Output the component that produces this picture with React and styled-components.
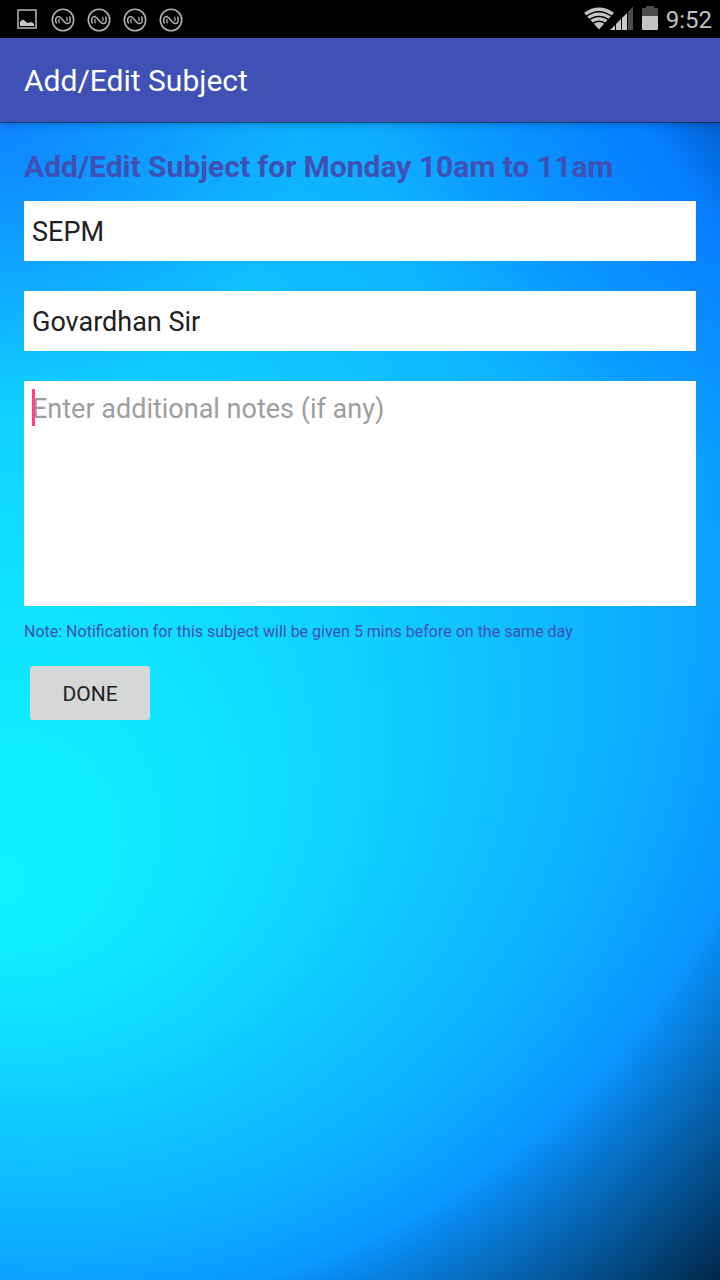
import React from "react";
import styled, { createGlobalStyle } from "styled-components";

const GlobalStyle = createGlobalStyle`
  *, *::before, *::after { box-sizing: border-box; }
  body { margin: 0; font-family: Roboto, "Liberation Sans", sans-serif; }
`;

const Screen = styled.div`
  display: flex;
  flex-direction: column;
  min-height: 100vh;
`;

const StatusBar = styled.div`
  display: flex;
  align-items: center;
  justify-content: space-between;
  height: 38px;
  padding: 2px 8px 0 15px;
  background: #000;
  color: #c0c0c0;
`;

const IconRow = styled.div`
  display: flex;
  align-items: center;
  gap: ${({ $gap }) => $gap}px;
  svg { display: block; }
`;

const Clock = styled.time`
  font-size: 24px;
  line-height: 36px;
`;

const AppBar = styled.header`
  position: relative;
  z-index: 1;
  display: flex;
  align-items: center;
  height: 84px;
  padding: 2px 24px 0;
  background: #3f51b5;
  box-shadow: 0 1px 0 rgba(0, 0, 0, 0.45), 0 3px 6px rgba(0, 0, 0, 0.2);
`;

const AppTitle = styled.h1`
  margin: 0;
  color: #fff;
  font-size: 30px;
  font-weight: 400;
  line-height: 36px;
`;

const Content = styled.main`
  position: relative;
  flex: 1;
  padding: 25px 24px 24px;
`;

const BackdropArt = styled.svg`
  position: absolute;
  inset: 0;
  width: 100%;
  height: 100%;
`;

const SubjectForm = styled.form`
  position: relative;
  display: flex;
  flex-direction: column;
`;

const FormTitle = styled.h2`
  margin: 0 0 14px;
  color: #3f51b5;
  font-size: 30px;
  font-weight: 700;
  line-height: 40px;
`;

const Fields = styled.div`
  display: flex;
  flex-direction: column;
  gap: 30px;
`;

const TextField = styled.input`
  width: 100%;
  height: 60px;
  padding: 2px 8px 0;
  border: 0;
  border-radius: 0;
  outline: 0;
  background: #fff;
  color: #212121;
  font: 400 27px/36px Roboto, "Liberation Sans", sans-serif;
`;

const NotesWrap = styled.div`
  position: relative;
  display: flex;
`;

const NotesField = styled.textarea`
  width: 100%;
  height: 225px;
  padding: 10px 8px;
  border: 0;
  outline: 0;
  resize: none;
  background: #fff;
  color: #212121;
  caret-color: #ff4081;
  font: 400 27px/36px Roboto, "Liberation Sans", sans-serif;
  &::placeholder { color: #9e9e9e; opacity: 1; }
`;

const Caret = styled.span`
  position: absolute;
  top: 8px;
  left: 8px;
  width: 3px;
  height: 37px;
  background: #ff4081;
`;

const Hint = styled.p`
  margin: 16px 0 24px;
  color: #3f51b5;
  font-size: 16px;
  line-height: 20px;
`;

const DoneButton = styled.button`
  align-self: flex-start;
  width: 120px;
  height: 54px;
  margin: 0 6px;
  padding: 2px 0 0;
  border: 0;
  border-radius: 3px;
  background: #d6d7d7;
  color: #212121;
  font: 400 21px/24px Roboto, "Liberation Sans", sans-serif;
`;

function Backdrop() {
  return (
    <BackdropArt viewBox="0 123 720 1157" preserveAspectRatio="none" aria-hidden="true">
      <defs>
        <radialGradient id="glow" gradientUnits="userSpaceOnUse" cx="60" cy="575" r="765" fx="0" fy="890">
          <stop offset="0" stopColor="#10f0ff" />
          <stop offset="0.12" stopColor="#10edff" />
          <stop offset="0.25" stopColor="#10e3ff" />
          <stop offset="0.5" stopColor="#10cbff" />
          <stop offset="0.75" stopColor="#0eb0ff" />
          <stop offset="0.95" stopColor="#0b96ff" />
          <stop offset="1" stopColor="#0a92ff" />
        </radialGradient>
        <radialGradient id="shade" gradientUnits="userSpaceOnUse" cx="60" cy="570" r="970">
          <stop offset="0.76" stopColor="#001a33" stopOpacity="0" />
          <stop offset="0.87" stopColor="#001a33" stopOpacity="0.42" />
          <stop offset="1" stopColor="#001a33" stopOpacity="0.9" />
        </radialGradient>
        <radialGradient id="cornerLeft" gradientUnits="userSpaceOnUse" cx="0" cy="110" r="300">
          <stop offset="0" stopColor="#0f70ff" stopOpacity="0.75" />
          <stop offset="1" stopColor="#0f70ff" stopOpacity="0" />
        </radialGradient>
        <radialGradient id="cornerRight" gradientUnits="userSpaceOnUse" cx="720" cy="123" r="340">
          <stop offset="0" stopColor="#0060ff" stopOpacity="0.55" />
          <stop offset="1" stopColor="#0060ff" stopOpacity="0" />
        </radialGradient>
      </defs>
      <rect y="123" width="720" height="1157" fill="url(#glow)" />
      <rect y="123" width="720" height="1157" fill="url(#cornerLeft)" />
      <rect y="123" width="720" height="1157" fill="url(#cornerRight)" />
      <rect y="123" width="720" height="1157" fill="url(#shade)" />
    </BackdropArt>
  );
}

function PictureIcon() {
  return (
    <svg width="24" height="22" viewBox="0 0 24 22" aria-hidden="true">
      <rect x="3" y="1" width="18" height="18" fill="none" stroke="#b8b8b8" strokeWidth="1.5" />
      <path d="M5 17v-4l2-2h2l2 2 2 1 3-1 2 1 1 1v2z" fill="#c8c8c8" />
    </svg>
  );
}

function WaveBadgeIcon() {
  return (
    <svg width="24" height="24" viewBox="0 0 24 24" fill="none" stroke="#b0b0b0" strokeLinecap="round" aria-hidden="true">
      <circle cx="12" cy="12" r="10.7" strokeWidth="1.6" />
      <path d="M5.300 15C4 12 4.800 8.300 7.600 8.400C10.500 8.600 13.200 15.500 16.200 15.600C19.200 15.700 20 12 18.700 9" strokeWidth="1.500" />
      <path d="M8.300 14.800C7.600 13.500 7.600 12.200 8.200 11.300M15.700 9.200C16.400 10.500 16.400 11.800 15.800 12.700" strokeWidth="1.300" />
    </svg>
  );
}

function SignalIcons() {
  return (
    <svg width="50" height="26" viewBox="584 7 50 26" aria-hidden="true">
      <path d="M584 12.800Q599 2 614 12.800L599 29.500z" fill="#c4c4c4" />
      <g fill="none" stroke="#000" strokeWidth="1.400">
        <path d="M585 17.200Q599 6.400 613 17.200" />
        <path d="M588 20.800Q599 12.200 610 20.800" />
        <path d="M591.500 24.200Q599 18.300 606.500 24.200" />
      </g>
      <path d="M610 30l5-5v5zM616 24l5-5v11h-5zM622 18l5-5v17h-5z" fill="#c8c8c8" />
      <path d="M628 12l5-5.500V30h-5z" fill="#4c4c4c" />
    </svg>
  );
}

function BatteryIcon() {
  return (
    <svg width="16" height="28" viewBox="0 0 16 28" aria-hidden="true">
      <path d="M0 3q0-1 1-1h3V1q0-1 1-1h6q1 0 1 1v1h3q1 0 1 1v7H0z" fill="#4c4c4c" />
      <path d="M0 10h16v13q0 1-1 1H1q-1 0-1-1z" fill="#c4c4c4" />
    </svg>
  );
}

export default function App() {
  return (
    <Screen>
      <GlobalStyle />
      <StatusBar>
        <IconRow $gap={12}>
          <PictureIcon />
          <WaveBadgeIcon />
          <WaveBadgeIcon />
          <WaveBadgeIcon />
          <WaveBadgeIcon />
        </IconRow>
        <IconRow $gap={8}>
          <SignalIcons />
          <BatteryIcon />
          <Clock>9:52</Clock>
        </IconRow>
      </StatusBar>
      <AppBar>
        <AppTitle>Add/Edit Subject</AppTitle>
      </AppBar>
      <Content>
        <Backdrop />
        <SubjectForm onSubmit={(event) => event.preventDefault()}>
          <FormTitle>Add/Edit Subject for Monday 10am to 11am</FormTitle>
          <Fields>
            <TextField type="text" aria-label="Subject" defaultValue="SEPM" />
            <TextField type="text" aria-label="Teacher" defaultValue="Govardhan Sir" />
            <NotesWrap>
              <NotesField aria-label="Additional notes" placeholder="Enter additional notes (if any)" />
              <Caret />
            </NotesWrap>
          </Fields>
          <Hint>Note: Notification for this subject will be given 5 mins before on the same day</Hint>
          <DoneButton type="submit">DONE</DoneButton>
        </SubjectForm>
      </Content>
    </Screen>
  );
}
